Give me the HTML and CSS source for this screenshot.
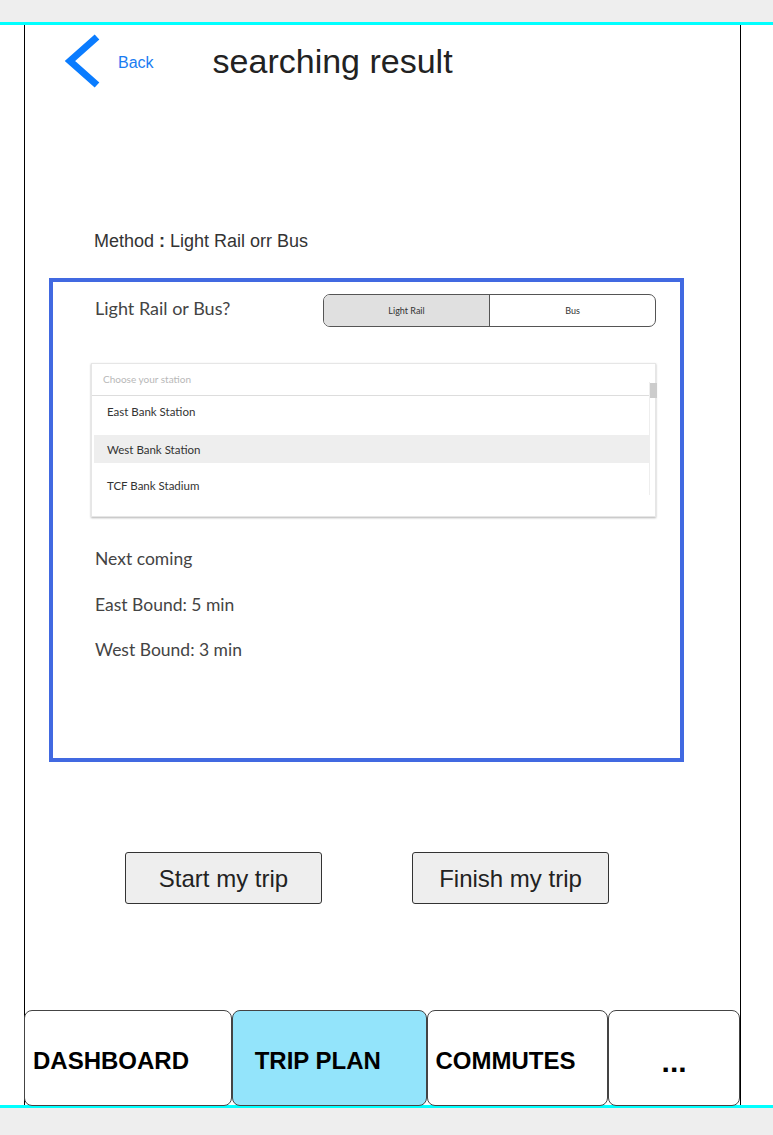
FILE: index.html
```html
<!DOCTYPE html>
<html>
<head>
<meta charset="utf-8">
<link rel="stylesheet" href="styles.css">
</head>
<body>
<div class="topband"></div>
<div class="screen">
  <div class="phone">
    <div class="header">
      <svg class="chev" width="40" height="54" viewBox="0 0 40 54">
        <polyline points="35,3 8,27 35,51" fill="none" stroke="#0a7cff" stroke-width="7" stroke-linejoin="miter" stroke-linecap="butt"/>
      </svg>
      <span class="back">Back</span>
      <span class="title">searching result</span>
    </div>
    <div class="method">Method <b>:</b> Light Rail orr Bus</div>
    <div class="box">
      <div class="row">
        <span class="q">Light Rail or Bus?</span>
        <div class="seg">
          <div class="seg-item seg-on">Light Rail</div>
          <div class="seg-item">Bus</div>
        </div>
      </div>
      <div class="dropdown">
        <div class="dd-head">Choose your station</div>
        <div class="dd-body">
          <div class="dd-list">
            <div class="dd-item">East Bank Station</div>
            <div class="dd-item dd-sel">West Bank Station</div>
            <div class="dd-item">TCF Bank Stadium</div>
          </div>
          <div class="scroll"><div class="thumb"></div></div>
        </div>
      </div>
      <div class="info">
        <div class="line">Next coming</div>
        <div class="line">East Bound: 5 min</div>
        <div class="line">West Bound: 3 min</div>
      </div>
    </div>
    <div class="buttons">
      <div class="btn">Start my trip</div>
      <div class="btn">Finish my trip</div>
    </div>
    <div class="tabs">
      <div class="tab t1">DASHBOARD</div>
      <div class="tab t2 active">TRIP PLAN</div>
      <div class="tab t3">COMMUTES</div>
      <div class="tab t4">...</div>
    </div>
  </div>
</div>
</body>
</html>
```

FILE: styles.css
```css
* { box-sizing: border-box; }
html, body { margin: 0; padding: 0; }
body {
  background: #eeeeee;
  font-family: "Liberation Sans", Arial, sans-serif;
  width: 773px;
  height: 1135px;
  overflow: hidden;
}
.topband { height: 22px; }
.screen {
  background: #ffffff;
  border-top: 3px solid #00ffff;
  border-bottom: 3px solid #00ffff;
  height: 1086px;
}
.phone {
  margin-left: 24px;
  width: 717px;
  height: 1080px;
  border-left: 1px solid #000;
  border-right: 1px solid #000;
  display: flex;
  flex-direction: column;
}
.header {
  height: 75px;
  display: flex;
  align-items: center;
  padding-left: 37px;
}
.chev { display: block; margin-top: -3px; }
.back {
  color: #1a7cf2;
  font-size: 16px;
  margin-left: 16px;
}
.title {
  color: #222;
  font-size: 34px;
  margin-left: 59px;
  margin-top: -3px;
}
.method {
  margin-top: 131px;
  margin-left: 69px;
  font-size: 18px;
  line-height: 20px;
  color: #333;
}
.method b { font-weight: bold; }
.box {
  margin-top: 27px;
  margin-left: 24px;
  width: 635px;
  height: 484px;
  border: 4px solid #4169e1;
  padding: 12px 24px 0 38px;
  font-family: Lato, "Noto Sans", sans-serif;
}
.row {
  display: flex;
  justify-content: space-between;
  align-items: center;
  height: 33px;
}
.q {
  margin-left: 4px;
  margin-top: -6px;
  font-size: 18px;
  color: #444;
}
.seg {
  width: 333px;
  height: 33px;
  border: 1px solid #555;
  border-radius: 7px;
  display: flex;
  overflow: hidden;
}
.seg-item {
  flex: 1;
  display: flex;
  align-items: center;
  justify-content: center;
  font-size: 9px;
  color: #333;
}
.seg-on {
  background: #e0e0e0;
  border-right: 1px solid #555;
}
.dropdown {
  margin-top: 36px;
  height: 154px;
  border: 1px solid #e6e6e6;
  box-shadow: 0 1px 2px rgba(0,0,0,0.3);
  background: #fff;
}
.dd-head {
  height: 32px;
  border-bottom: 1px solid #ddd;
  padding-left: 11px;
  padding-bottom: 2px;
  display: flex;
  align-items: center;
  font-size: 10px;
  color: #b8b8b8;
}
.dd-body {
  display: flex;
  padding-left: 2px;
}
.dd-list { flex: 1; padding-top: 0; margin-top: -3px; }
.dd-item {
  height: 37px;
  display: flex;
  align-items: center;
  padding-left: 13px;
  font-size: 11.5px;
  color: #333;
}
.dd-sel {
  background: #eeeeee;
  height: 28px;
  margin: 5px 0 4px;
}
.scroll {
  width: 7px;
  height: 113px;
  margin-top: -14px;
  border-left: 1px solid #eee;
  margin-right: -1px;
}
.thumb {
  width: 7px;
  height: 15px;
  margin-top: 1px;
  background: #cccccc;
}
.info {
  margin-top: 29px;
  margin-left: 4px;
}
.line {
  font-size: 17.5px;
  color: #444;
  height: 45.5px;
  line-height: 26px;
}
.buttons {
  margin-top: 90px;
  margin-left: 100px;
  display: flex;
  gap: 90px;
}
.btn {
  width: 197px;
  height: 52px;
  border: 1px solid #333;
  border-radius: 3px;
  background: #eeeeee;
  display: flex;
  align-items: center;
  justify-content: center;
  padding-top: 2px;
  font-size: 24px;
  color: #222;
}
.tabs {
  margin-top: auto;
  margin-left: -1px;
  display: flex;
  height: 96px;
  margin-bottom: -1px;
}
.tab {
  border: 1px solid #444;
  border-radius: 8px;
  background: #fff;
  display: flex;
  align-items: center;
  padding-top: 6px;
  font-size: 24px;
  font-weight: bold;
  color: #000;
}
.t1 { width: 208px; padding-left: 8px; }
.t2 { width: 196px; padding-left: 22px; }
.t3 { width: 181px; padding-left: 7px; }
.t4 { width: 132px; justify-content: center; padding-top: 8px; font-size: 30px; }
.active { background: #93e4fb; }
```
